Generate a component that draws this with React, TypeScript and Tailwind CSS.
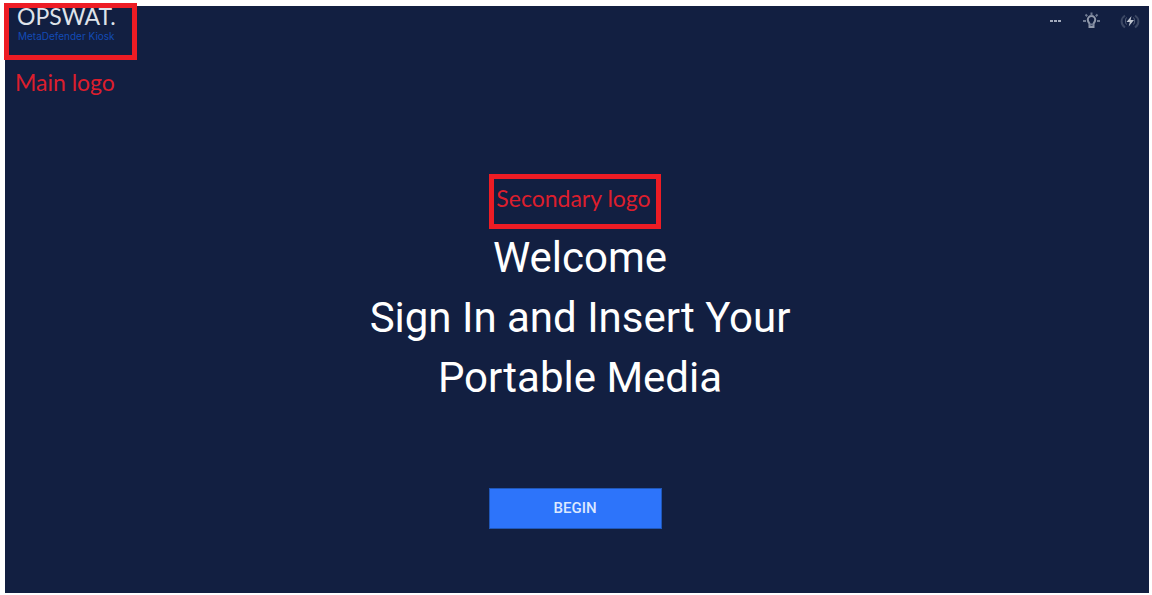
import type { ReactNode } from "react";

function IconButton({ label, children }: { label: string; children: ReactNode }) {
  return (
    <button aria-label={label} className="flex size-5 items-center justify-center">
      {children}
    </button>
  );
}

function MoreIcon() {
  return (
    <svg width="20" height="20" viewBox="0 0 20 20" fill="#a3abbd">
      <rect x="6" y="9" width="3" height="2" />
      <rect x="10" y="9" width="3" height="2" />
      <rect x="14" y="9" width="3" height="2" />
    </svg>
  );
}

function BulbIcon() {
  return (
    <svg width="20" height="20" viewBox="0 0 20 20" fill="none" stroke="#8f98aa" strokeWidth="2">
      <path d="M7.500 13c0-1.200-1.700-2-1.700-4.300a3.700 3.700 0 0 1 7.400 0c0 2.300-1.700 3.100-1.700 4.300v3h-4z" />
      <path
        d="M9.500 1.500v3M3.500 3.500l1.700 1.700M15.500 3.500l-1.700 1.700M1 10h3M15 10h3M7.500 13.500h4"
        stroke="#6f7a92"
      />
    </svg>
  );
}

function PowerIcon() {
  return (
    <svg width="20" height="20" viewBox="0 0 20 20" fill="none">
      <path
        d="M5 4.500C.500 7.500.500 13.500 5 16.500M15 4.500c4.500 3 4.500 9 0 12"
        stroke="#3c4864"
        strokeWidth="2"
      />
      <path d="M6.500 6.500c-1.500 2-1.500 5 0 7M13.500 6.500c1.500 2 1.500 5 0 7" stroke="#56617a" />
      <path d="M11.500 5L6.500 11h3.300L8.700 15.500l5.300-6.500h-3.400z" fill="#c0c6d0" />
    </svg>
  );
}

function Header() {
  return (
    <header className="flex items-start justify-between">
      <div>
        {/* main logo */}
        <div className="-mt-[3px] -ml-px h-[57px] w-[133px] border-[5px] border-[#ed1c24] pl-2">
          <div className="font-[Lato,sans-serif] text-[23px] leading-4 text-[#dfe3ea]">OPSWAT.</div>
          <div className="pl-px font-[Inter,sans-serif] text-[10px] leading-6 text-[#134bb5]">
            MetaDefender Kiosk
          </div>
        </div>
        <p className="mt-2 ml-[10px] font-[Lato,sans-serif] text-[23px] leading-7 text-[#dc1e2d]">
          Main logo
        </p>
      </div>

      <nav className="flex gap-[18px] pt-[5px] pr-[9px]">
        <IconButton label="More">
          <MoreIcon />
        </IconButton>
        <IconButton label="Brightness">
          <BulbIcon />
        </IconButton>
        <IconButton label="Power">
          <PowerIcon />
        </IconButton>
      </nav>
    </header>
  );
}

export default function App() {
  return (
    <div className="flex min-h-screen bg-white pt-[6px] pr-[3px] pb-[2px] pl-[5px] font-[Roboto,sans-serif]">
      <div className="flex flex-1 flex-col bg-[#121f41]">
        <Header />

        <main className="mt-[78px] flex flex-col items-center pb-16">
          {/* secondary logo */}
          <div className="mr-1 h-[55px] w-[172px] border-[5px] border-[#ed1c24] pt-[5px] pr-[3px] text-center font-[Lato,sans-serif] text-[23px] leading-7 whitespace-nowrap text-[#dc1e2d]">
            Secondary logo
          </div>

          <h1 className="-mt-px ml-[6px] text-center text-[42px] leading-[60px] text-white">
            Welcome
            <br />
            Sign In and Insert Your
            <br />
            Portable Media
          </h1>

          <button className="mt-20 mr-1 h-[41px] w-[173px] border border-[#2057b8] bg-[#2d74fa] text-[15px] font-medium text-[#dce8ff]">
            BEGIN
          </button>
        </main>
      </div>
    </div>
  );
}
